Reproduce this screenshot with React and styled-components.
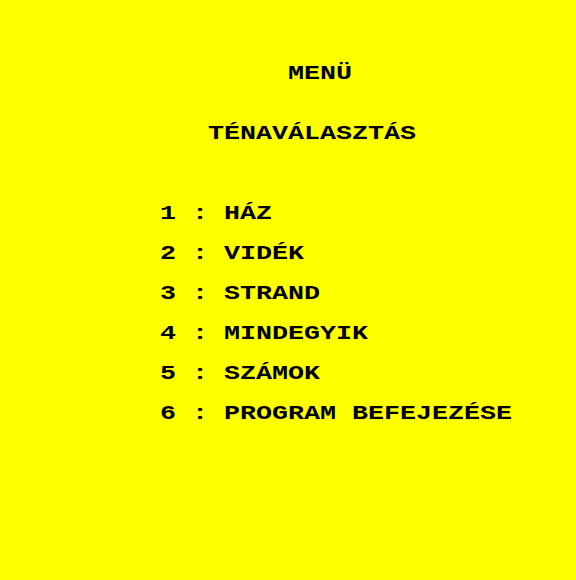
import React from "react";
import styled, { createGlobalStyle } from "styled-components";

const GlobalStyle = createGlobalStyle`
	html, body {
		margin: 0;
		padding: 0;
		background-color: #ffff00;
	}
`;

// one character cell of the old screen is 16px wide
const CELL = 16;
const FONT_SIZE = 21;
const STRETCH = CELL / (FONT_SIZE * 0.6);

const items = [
	{ key: "1", label: "HÁZ" },
	{ key: "2", label: "VIDÉK" },
	{ key: "3", label: "STRAND" },
	{ key: "4", label: "MINDEGYIK" },
	{ key: "5", label: "SZÁMOK" },
	{ key: "6", label: "PROGRAM BEFEJEZÉSE" },
];

export default function App() {
	return (
		<>
			<GlobalStyle />
			<Screen>
				<Line $indent={8}>MENÜ</Line>
				<Heading $indent={3}>TÉNAVÁLASZTÁS</Heading>
				<MenuList>
					{items.map((item) => (
						<Line key={item.key}>{`${item.key} : ${item.label}`}</Line>
					))}
				</MenuList>
			</Screen>
		</>
	);
}

const Screen = styled.div`
	display: flex;
	flex-direction: column;
	box-sizing: border-box;
	width: 576px;
	height: 580px;
	padding: 64px 0 0 160px;
	background-color: #ffff00;
	color: #000000;
	overflow: hidden;
`;

const Line = styled.div`
	height: 20px;
	padding-left: ${({ $indent = 0 }) => ($indent * CELL) / STRETCH}px;
	font-family: "Liberation Mono", "DejaVu Sans Mono", monospace;
	font-weight: bold;
	font-size: ${FONT_SIZE}px;
	line-height: 20px;
	white-space: pre;
	transform: scaleX(${STRETCH});
	transform-origin: 0 0;
`;

const Heading = styled(Line)`
	margin-top: 40px;
`;

const MenuList = styled.div`
	display: flex;
	flex-direction: column;
	gap: 20px;
	margin-top: 60px;
`;
